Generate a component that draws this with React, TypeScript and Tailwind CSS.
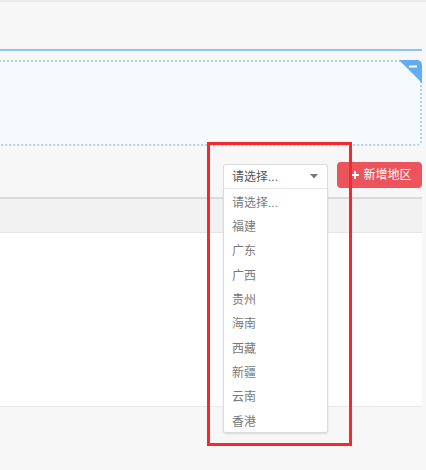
import React from "react";

const items = ["请选择...", "福建", "广东", "广西", "贵州", "海南", "西藏", "新疆", "云南", "香港"];

export default function App() {
  return (
    <div
      className="relative w-[426px] h-[470px] overflow-hidden bg-[#f7f7f7] flex flex-col"
      style={{ fontFamily: '"Liberation Sans", "Noto Sans CJK SC", sans-serif' }}
    >
      <div className="h-[2px] bg-[#ebebeb] shrink-0" />
      <div className="h-[47px] shrink-0" />
      <div className="h-[2px] bg-[#8cc5f8] mr-[4px] shrink-0" />
      <div className="h-[9px] shrink-0" />
      {/* dashed box */}
      <div className="relative h-[86px] ml-[-6px] mr-[4px] shrink-0 border-2 border-dotted border-[#a7d1f6] rounded-r-[5px] bg-[#f5faff]">
        <div className="absolute top-[-2px] right-[-2px] w-[23px] h-[23px] overflow-hidden rounded-tr-[5px]">
          <svg width="23" height="23" viewBox="0 0 23 23" className="block">
            <polygon points="0,0 23,0 23,23" fill="#62acf6" />
            <rect x="10" y="5.5" width="8" height="2" fill="#ffffff" />
          </svg>
        </div>
      </div>
      {/* toolbar */}
      <div className="h-[16px] shrink-0" />
      <div className="flex justify-end items-start gap-[9px] pr-[4px] h-[26px] shrink-0">
        <div className="relative mt-[2px] w-[105px] h-[25px] bg-white border border-[#dcdcdc] border-b-[#e8e8e8] rounded-t-[3px] flex items-center justify-between pl-[8px] pr-[9px] text-[12px] text-[#555]">
          <span className="leading-none">请选择...</span>
          <svg width="8" height="5" viewBox="0 0 8 5" className="block">
            <polygon points="0,0 8,0 4,4.5" fill="#777" />
          </svg>
          <div className="absolute left-[-1px] top-[24px] w-[105px] z-10 bg-white border border-t-0 border-[#dcdcdc] rounded-b-[3px] shadow-[0_1px_2px_rgba(0,0,0,0.12)] flex flex-col">
            {items.map((it) => (
              <div key={it} className="h-[24.33px] flex items-center pl-[8px] pt-[3px] text-[12px] text-[#7a7a7a]">
                {it}
              </div>
            ))}
          </div>
        </div>
        <button className="w-[85px] h-[26px] rounded-[4px] bg-[#eb545a] text-white text-[12px] flex items-center justify-center gap-[4px] pl-[4px]">
          <svg width="8" height="8" viewBox="0 0 8 8" className="block">
            <rect x="3" y="0" width="2" height="8" fill="#fff" />
            <rect x="0" y="3" width="8" height="2" fill="#fff" />
          </svg>
          <span className="leading-none">新增地区</span>
        </button>
      </div>
      <div className="h-[9px] shrink-0" />
      {/* table */}
      <div className="mr-[4px] shrink-0 flex flex-col">
        <div className="h-[2px] bg-[#dadada]" />
        <div className="h-[34px] bg-[#f2f2f2] border-b border-[#e6e6e6]" />
        <div className="h-[174px] bg-white border-b border-[#e8e8e8]" />
      </div>
      {/* annotation */}
      <div className="absolute left-[207px] top-[142px] w-[145px] h-[304px] border-[3px] border-[#f5282c] pointer-events-none z-20" />
    </div>
  );
}
